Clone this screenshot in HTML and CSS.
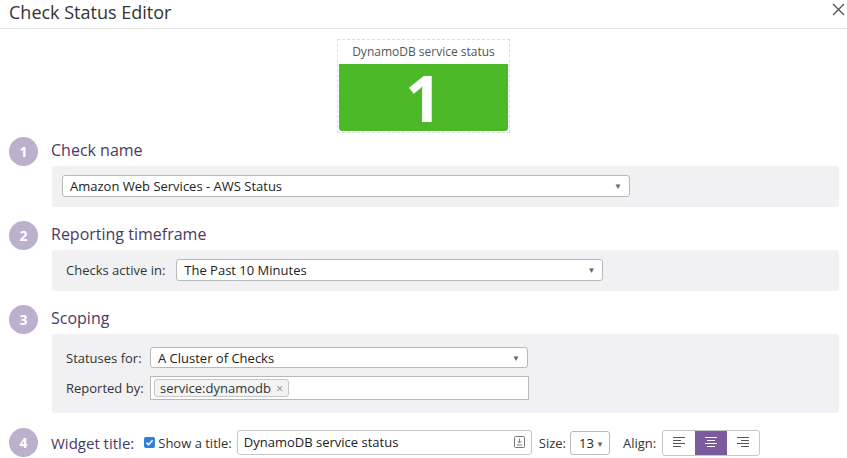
FILE: index.html
```html
<!DOCTYPE html>
<html lang="en">
<head>
  <meta charset="UTF-8" />
  <title>Check Status Editor</title>
  <link rel="stylesheet" href="styles.css">
</head>
<body>
  <div class="header">
    <h1>Check Status Editor</h1>
    <svg class="close" width="13" height="13" viewBox="0 0 13 13">
      <path d="M1 1 L12 12 M12 1 L1 12" stroke="#555" stroke-width="1.4" fill="none"/>
    </svg>
  </div>

  <div class="preview">
    <div class="preview-title">DynamoDB service status</div>
    <div class="preview-value">1</div>
  </div>

  <div class="step">
    <div class="step-head"><span class="num">1</span><span class="step-title">Check name</span></div>
    <div class="panel">
      <div class="select wide">Amazon Web Services - AWS Status<span class="arrow">&#9660;</span></div>
    </div>
  </div>

  <div class="step">
    <div class="step-head"><span class="num">2</span><span class="step-title">Reporting timeframe</span></div>
    <div class="panel row">
      <label>Checks active in:</label>
      <div class="select time">The Past 10 Minutes<span class="arrow">&#9660;</span></div>
    </div>
  </div>

  <div class="step">
    <div class="step-head"><span class="num">3</span><span class="step-title">Scoping</span></div>
    <div class="panel scoping">
      <div class="row">
        <label class="lbl">Statuses for:</label>
        <div class="select scope">A Cluster of Checks<span class="arrow">&#9660;</span></div>
      </div>
      <div class="row">
        <label class="lbl">Reported by:</label>
        <div class="tags"><span class="tag">service:dynamodb <span class="x">&times;</span></span></div>
      </div>
    </div>
  </div>

  <div class="step-head last">
    <span class="num">4</span><span class="step-title">Widget title:</span>
    <span class="check"><svg width="11" height="11" viewBox="0 0 11 11"><rect width="11" height="11" rx="2" fill="#2f7fd8"/><path d="M2.5 5.6 L4.6 7.7 L8.6 3.3" stroke="#fff" stroke-width="1.6" fill="none"/></svg>Show a title:</span>
    <div class="title-input">DynamoDB service status
      <svg class="tpl" width="11" height="12" viewBox="0 0 11 12"><rect x="0.5" y="0.5" width="10" height="11" rx="1" fill="none" stroke="#777"/><path d="M5.5 2.5 V6.5 M3.5 5 L5.5 7 L7.5 5 M3 9 H8" stroke="#777" stroke-width="1" fill="none"/></svg>
    </div>
    <label>Size:</label>
    <div class="select size">13<span class="arrow">&#9660;</span></div>
    <label>Align:</label>
    <div class="align">
      <span class="btn"><svg width="12" height="11" viewBox="0 0 12 11"><path d="M0 .5H12M0 3.5H8M0 6.5H12M0 9.5H8" stroke="#555"/></svg></span>
      <span class="btn on"><svg width="12" height="11" viewBox="0 0 12 11"><path d="M0 .5H12M2 3.5H10M0 6.5H12M2 9.5H10" stroke="#fff"/></svg></span>
      <span class="btn"><svg width="12" height="11" viewBox="0 0 12 11"><path d="M0 .5H12M4 3.5H12M0 6.5H12M4 9.5H12" stroke="#555"/></svg></span>
    </div>
  </div>
</body>
</html>
```

FILE: styles.css
```css
body {
  margin: 0;
  font-family: "Open Sans", Arial, sans-serif;
  color: #333;
  background: #fff;
  width: 847px;
  height: 458px;
  overflow: hidden;
}

.header {
  display: flex;
  justify-content: space-between;
  align-items: flex-start;
  height: 28px;
  border-bottom: 1px solid #e2e2e2;
  padding: 0 9px;
}

h1 {
  margin: 0;
  font-size: 18px;
  font-weight: 400;
  line-height: 24px;
  color: #333;
}

.close {
  margin-top: 3px;
  margin-right: -7px;
}

.preview {
  width: 171px;
  margin: 10px auto 0;
  border: 1px dashed #ddd;
  padding: 0 0 1px;
}

.preview-title {
  text-align: center;
  font-size: 12px;
  color: #555;
  line-height: 24px;
}

.preview-value {
  background: #4cb928;
  margin: 0 1px;
  height: 67px;
  border-radius: 0 0 3px 3px;
  color: #fff;
  font-weight: 700;
  font-size: 64px;
  line-height: 1;
  display: flex;
  align-items: center;
  justify-content: center;
}

.step {
  margin-top: 4px;
  margin-bottom: 14px;
}

.step + .step {
  margin-top: 0;
}

.step-head {
  display: flex;
  align-items: center;
  height: 29px;
  padding-left: 9px;
}

.num {
  width: 29px;
  height: 29px;
  border-radius: 50%;
  background: #bcb0cc;
  color: #fff;
  font-size: 14px;
  font-weight: 700;
  display: flex;
  align-items: center;
  justify-content: center;
  flex: none;
}

.step-title {
  margin-left: 13px;
  margin-top: -3px;
  font-size: 16px;
  color: #4a3a62;
}

.panel {
  margin-left: 52px;
  margin-right: 8px;
  background: #f1f1f3;
  border-radius: 3px;
  padding: 9px 10px 10px;
}

.row {
  display: flex;
  align-items: center;
}

.panel.row {
  padding-left: 14px;
}

label {
  font-size: 13px;
  color: #333;
}

.select {
  position: relative;
  box-sizing: border-box;
  height: 22px;
  background: #fff;
  border: 1px solid #b9b9b9;
  border-radius: 3px;
  font-size: 13px;
  line-height: 20px;
  padding-left: 7px;
  color: #222;
}

.arrow {
  position: absolute;
  right: 7px;
  top: 0;
  font-size: 8px;
  color: #666;
}

.wide { width: 568px; }
.time { width: 427px; margin-left: 11px; }

.scoping {
  padding: 13px 14px 13px;
}

.scoping .row + .row {
  margin-top: 8px;
}

.lbl {
  width: 84px;
  flex: none;
}

.scope { width: 378px; height: 21px; }

.tags {
  box-sizing: border-box;
  width: 379px;
  height: 24px;
  background: #fff;
  border: 1px solid #b9b9b9;
  padding: 2px 3px;
  display: flex;
}

.tag {
  border: 1px solid #c6c6c6;
  border-radius: 3px;
  background: #f3f3f3;
  font-size: 13px;
  line-height: 16px;
  padding: 0 5px;
  color: #333;
}

.x {
  color: #888;
  font-size: 12px;
  margin-left: 2px;
}

.last {
  margin-top: 15px;
}

.last .step-title {
  font-size: 15px;
  margin-top: 0;
  margin-right: 10px;
}

.check {
  display: flex;
  align-items: center;
  font-size: 13px;
  margin-right: 5px;
}

.check svg {
  margin-right: 3px;
}

.title-input {
  position: relative;
  box-sizing: border-box;
  width: 295px;
  height: 25px;
  border: 1px solid #c6c6c6;
  border-radius: 3px;
  font-size: 13px;
  line-height: 23px;
  padding-left: 6px;
  color: #222;
  margin-right: 7px;
}

.tpl {
  position: absolute;
  right: 6px;
  top: 5px;
}

.size {
  width: 40px;
  height: 24px;
  line-height: 22px;
  margin: 0 13px 0 4px;
  font-size: 13px;
  padding-left: 8px;
}

.size .arrow {
  right: 5px;
  line-height: 23px;
}

.align {
  display: flex;
  margin-left: 6px;
  border: 1px solid #c6c6c6;
  border-radius: 3px;
  overflow: hidden;
}

.btn {
  width: 32px;
  height: 24px;
  display: flex;
  align-items: center;
  justify-content: center;
}

.btn.on {
  background: #7c5a9e;
}
```
